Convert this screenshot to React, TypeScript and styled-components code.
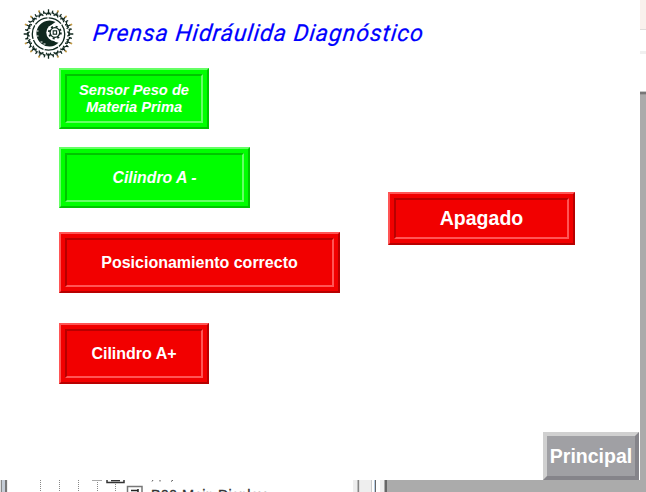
import React from "react";
import styled, { createGlobalStyle } from "styled-components";

const Global = createGlobalStyle`
  * { box-sizing: border-box; }
  body { margin: 0; background: #fff; overflow: hidden; font-family: "Liberation Sans", Arial, sans-serif; }
`;

const Desktop = styled.div`
  width: 646px;
  height: 492px;
  display: grid;
  grid-template: 480px 12px / 640px 6px;
`;

const Screen = styled.main`
  background: #fff;
  display: flex;
  flex-direction: column;
`;

const Header = styled.header`
  height: 68px;
  display: flex;
  padding: 8px 0 0 22px;
`;

const Title = styled.h1`
  margin: 11px 0 0 17px;
  font: italic 400 23.5px/28px Roboto, sans-serif;
  letter-spacing: 0.84px;
  color: #00f;
  white-space: nowrap;
  transform: skewX(-7deg);
  -webkit-text-stroke: 0.2px #00f;
`;

const Body = styled.div`
  display: flex;
  justify-content: space-between;
  height: 364px;
  padding: 0 65px 0 59px;
`;

const Column = styled.div`
  display: flex;
  flex-direction: column;
  align-items: flex-start;
`;

const tones = {
  green: { face: "#00ff00", light: "#66ff66", dark: "#00c400" },
  red: { face: "#f20000", light: "#ff5555", dark: "#b80000" },
};

type Tone = keyof typeof tones;

const Lamp = styled.div<{ $tone: Tone; $w: number; $h?: number; $gap?: number }>`
  width: ${(p) => p.$w}px;
  height: ${(p) => p.$h ?? 61}px;
  margin-top: ${(p) => p.$gap ?? 0}px;
  padding: 4px;
  display: flex;
  background: ${(p) => tones[p.$tone].face};
  border: 2px solid;
  border-color: ${(p) => {
    const t = tones[p.$tone];
    return `${t.light} ${t.dark} ${t.dark} ${t.light}`;
  }};
`;

const LampFace = styled.div<{ $tone: Tone; $size: number; $italic?: boolean }>`
  flex: 1;
  display: flex;
  align-items: center;
  justify-content: center;
  text-align: center;
  white-space: pre;
  border: 2px solid;
  border-color: ${(p) => {
    const t = tones[p.$tone];
    return `${t.dark} ${t.light} ${t.light} ${t.dark}`;
  }};
  color: #fff;
  font-weight: 700;
  font-style: ${(p) => (p.$italic ? "italic" : "normal")};
  font-size: ${(p) => p.$size}px;
  line-height: 17px;
`;

const Footer = styled.footer`
  display: flex;
  justify-content: flex-end;
  padding-right: 1px;
`;

const NavButton = styled.button`
  width: 96px;
  height: 48px;
  padding: 0;
  border: 4px solid;
  border-color: #d0d0d0 #85848a #85848a #d0d0d0;
  background: #a0a0a4;
  color: #fff;
  font: 700 19.5px/24px "Liberation Sans", Arial, sans-serif;
  white-space: nowrap;
`;

const RightEdge = styled.div`
  background: linear-gradient(#f9f1ed 0 29px, #dfdcda 29px 30px, #fff 30px 51px, #f0f0f0 51px 54px,
    #fff 54px 91px, #c8c8c8 91px 92px, #777 92px 94px, #999 94px 95px, #ababab 95px);
`;

const BottomEdge = styled.div`
  grid-column: 1 / 3;
  display: flex;
  overflow: hidden;
`;

const Gutter = styled.div`
  width: 8px;
  background: linear-gradient(90deg, #ddd 0 1px, #888 1px 2px, #c4ccd6 2px 5px, #777 5px 7px, #eee 7px);
`;

const Tree = styled.div`
  display: flex;
  width: 341px;
`;

const Splitters = styled.div`
  width: 38px;
  background: linear-gradient(90deg, #fff 0 4px, #eee 4px 8px, #bbb 8px 9px, #858585 9px 10px, #ddd 10px 11px, #eee 11px 22px,
    #ccc 22px 23px, #fff 23px 25px, #b8cfe6 25px 26px, #666 26px 27px, #fff 27px 31px, #eee 31px 35px,
    #aaa 35px 36px, #666 36px 38px);
`;

const Workspace = styled.div`
  flex: 1;
  background: #ababab;
`;

const rays = Array.from({ length: 16 }, (_, i) => i * 22.5);

function Emblem() {
  return (
    <svg width="53" height="52" viewBox="-26.5 -26 53 52" fill="none" stroke="#10281f">
      {rays.map((a, i) => (
        <g key={a} transform={`rotate(${a})`}>
          <path d="M-2.2 -18.8 L-1 -21.5 M2.2 -18.8 L1 -21.5 M0 -19.5 V-24.8" strokeWidth="1.3" />
          <path d="M3.4 -20.3 L4.4 -23.4 M5.8 -19.6 L3.4 -22.4" strokeWidth="1.2" />
          {i % 4 !== 0 && <path d="M0 -23.4 V-25.6" stroke="#c49a45" strokeWidth="1.5" />}
        </g>
      ))}
      <circle r="16.2" strokeWidth="1.3" strokeDasharray="14 1.2" />
      <path d="M7 -12 A13 13 0 1 0 10 8.8 A11 11 0 0 1 7 -12Z" fill="#10281f" stroke="none" />
      <circle cx="6.4" cy="-1.5" r="8.6" fill="#fff" stroke="none" />
      <path d="M-12 -3 h2 M-12 2 h2 M-8 8 h2 M-5 10 h2" stroke="#fff" strokeWidth="1" />
      <circle cx="6.4" cy="-1.5" r="4.8" strokeWidth="1.3" />
      <circle cx="6.4" cy="-1.5" r="6" strokeWidth="1.8" strokeDasharray="2 2.71" />
      <rect x="4.7" y="-3.2" width="3.4" height="3.4" strokeWidth="1.1" />
    </svg>
  );
}

function TreeSliver() {
  return (
    <svg width="341" height="12" viewBox="8 0 341 12">
      <g stroke="#888" strokeDasharray="1 1">
        <path d="M40.5 0V12M59.5 0V12M78.5 0V12M97.5 0V12M115.5 4V12" />
      </g>
      <path d="M92 .5H102" stroke="#aaa" />
      <path d="M107 0V2.5H124V0M111 .5H120" fill="none" stroke="#333" strokeWidth="1.5" />
      <path d="M127.5 12V6.5H142V12" fill="#fff" stroke="#777" strokeWidth="1.5" />
      <path d="M131 10.5H138M138 9V12" stroke="#222" strokeWidth="1.5" />
      <path d="M153 0l-1 1.5M160 0v1.5M173 0l-2 1.5" stroke="#555" />
      <text x="151" y="19.5" fontFamily="Liberation Sans" fontSize="14.5" fill="#333" stroke="#333" strokeWidth=".3" textLength="115">
        B00-Main Display
      </text>
    </svg>
  );
}

export default function App() {
  return (
    <>
      <Global />
      <Desktop>
        <Screen>
          <Header>
            <Emblem />
            <Title>Prensa Hidráulida Diagnóstico</Title>
          </Header>
          <Body>
            <Column>
              <Lamp $tone="green" $w={150}>
                <LampFace $tone="green" $size={14.67} $italic>{"Sensor Peso de\nMateria Prima"}</LampFace>
              </Lamp>
              <Lamp $tone="green" $w={191} $gap={18}>
                <LampFace $tone="green" $size={15.8} $italic>Cilindro A -</LampFace>
              </Lamp>
              <Lamp $tone="red" $w={281} $gap={24}>
                <LampFace $tone="red" $size={16}>Posicionamiento correcto</LampFace>
              </Lamp>
              <Lamp $tone="red" $w={150} $gap={30}>
                <LampFace $tone="red" $size={16}>Cilindro A+</LampFace>
              </Lamp>
            </Column>
            <Column>
              <Lamp $tone="red" $w={187} $h={53} $gap={124}>
                <LampFace $tone="red" $size={19.5}>Apagado</LampFace>
              </Lamp>
            </Column>
          </Body>
          <Footer>
            <NavButton>Principal</NavButton>
          </Footer>
        </Screen>
        <RightEdge />
        <BottomEdge>
          <Gutter />
          <Tree><TreeSliver /></Tree>
          <Splitters />
          <Workspace />
        </BottomEdge>
      </Desktop>
    </>
  );
}
